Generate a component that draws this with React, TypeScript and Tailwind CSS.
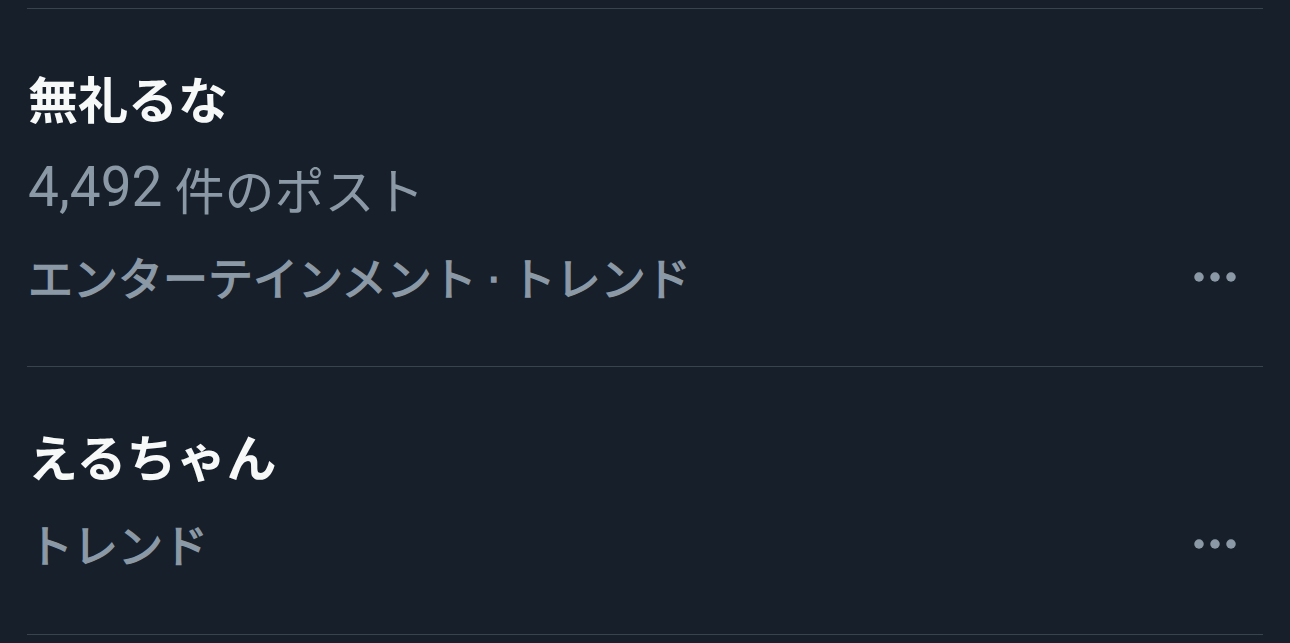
import React from "react";

const CJK = { fontFamily: '"Noto Sans CJK JP", "Noto Sans", sans-serif' };
const LAT = { fontFamily: '"Liberation Sans", Arial, sans-serif' };

function Dots() {
  return (
    <svg width="42" height="10" viewBox="0 0 42 10" className="mr-[27px] shrink-0">
      <circle cx="5" cy="5" r="4.75" fill="#8b98a5" />
      <circle cx="21" cy="5" r="4.75" fill="#8b98a5" />
      <circle cx="37" cy="5" r="4.75" fill="#8b98a5" />
    </svg>
  );
}

export default function App() {
  return (
    <div className="min-h-screen w-full bg-[#17202a] pt-[8px]" style={CJK}>
      <div className="mx-[27px] border-t border-[#38444d]">
        <div className="border-b border-[#38444d] pt-[58px] pb-[62px]">
          <div className="text-[50px] leading-[60px] font-bold text-[#f7f9f9] pl-[1px]">無礼るな</div>
          <div className="mt-[31px] flex items-center h-[60px] text-[50px] leading-[60px] text-[#8b98a5] pl-[1px]">
            <span className="text-[55px] leading-[60px] pb-[2px]" style={{ fontFamily: 'Roboto, "Noto Sans", sans-serif' }}>4,492</span>
            <span className="ml-[12px]">件のポスト</span>
          </div>
          <div className="mt-[32px] flex items-center justify-between h-[54px] text-[45px] leading-[54px] text-[#8b98a5] [-webkit-text-stroke:1.4px_#8b98a5]">
            <div className="flex items-center pl-[1px]">
              <span>エンターテインメント</span>
              <span className="w-[34px] text-center leading-[54px]" style={LAT}>·</span>
              <span>トレンド</span>
            </div>
            <Dots />
          </div>
        </div>
        <div className="border-b border-[#38444d] pt-[58px] pb-[63px]">
          <div className="text-[50px] leading-[60px] font-bold text-[#f7f9f9] pl-[1px]">えるちゃん</div>
          <div className="mt-[32px] flex items-center justify-between h-[54px] text-[45px] leading-[54px] text-[#8b98a5] [-webkit-text-stroke:1.4px_#8b98a5]">
            <span className="pl-[1px]">トレンド</span>
            <Dots />
          </div>
        </div>
      </div>
    </div>
  );
}
